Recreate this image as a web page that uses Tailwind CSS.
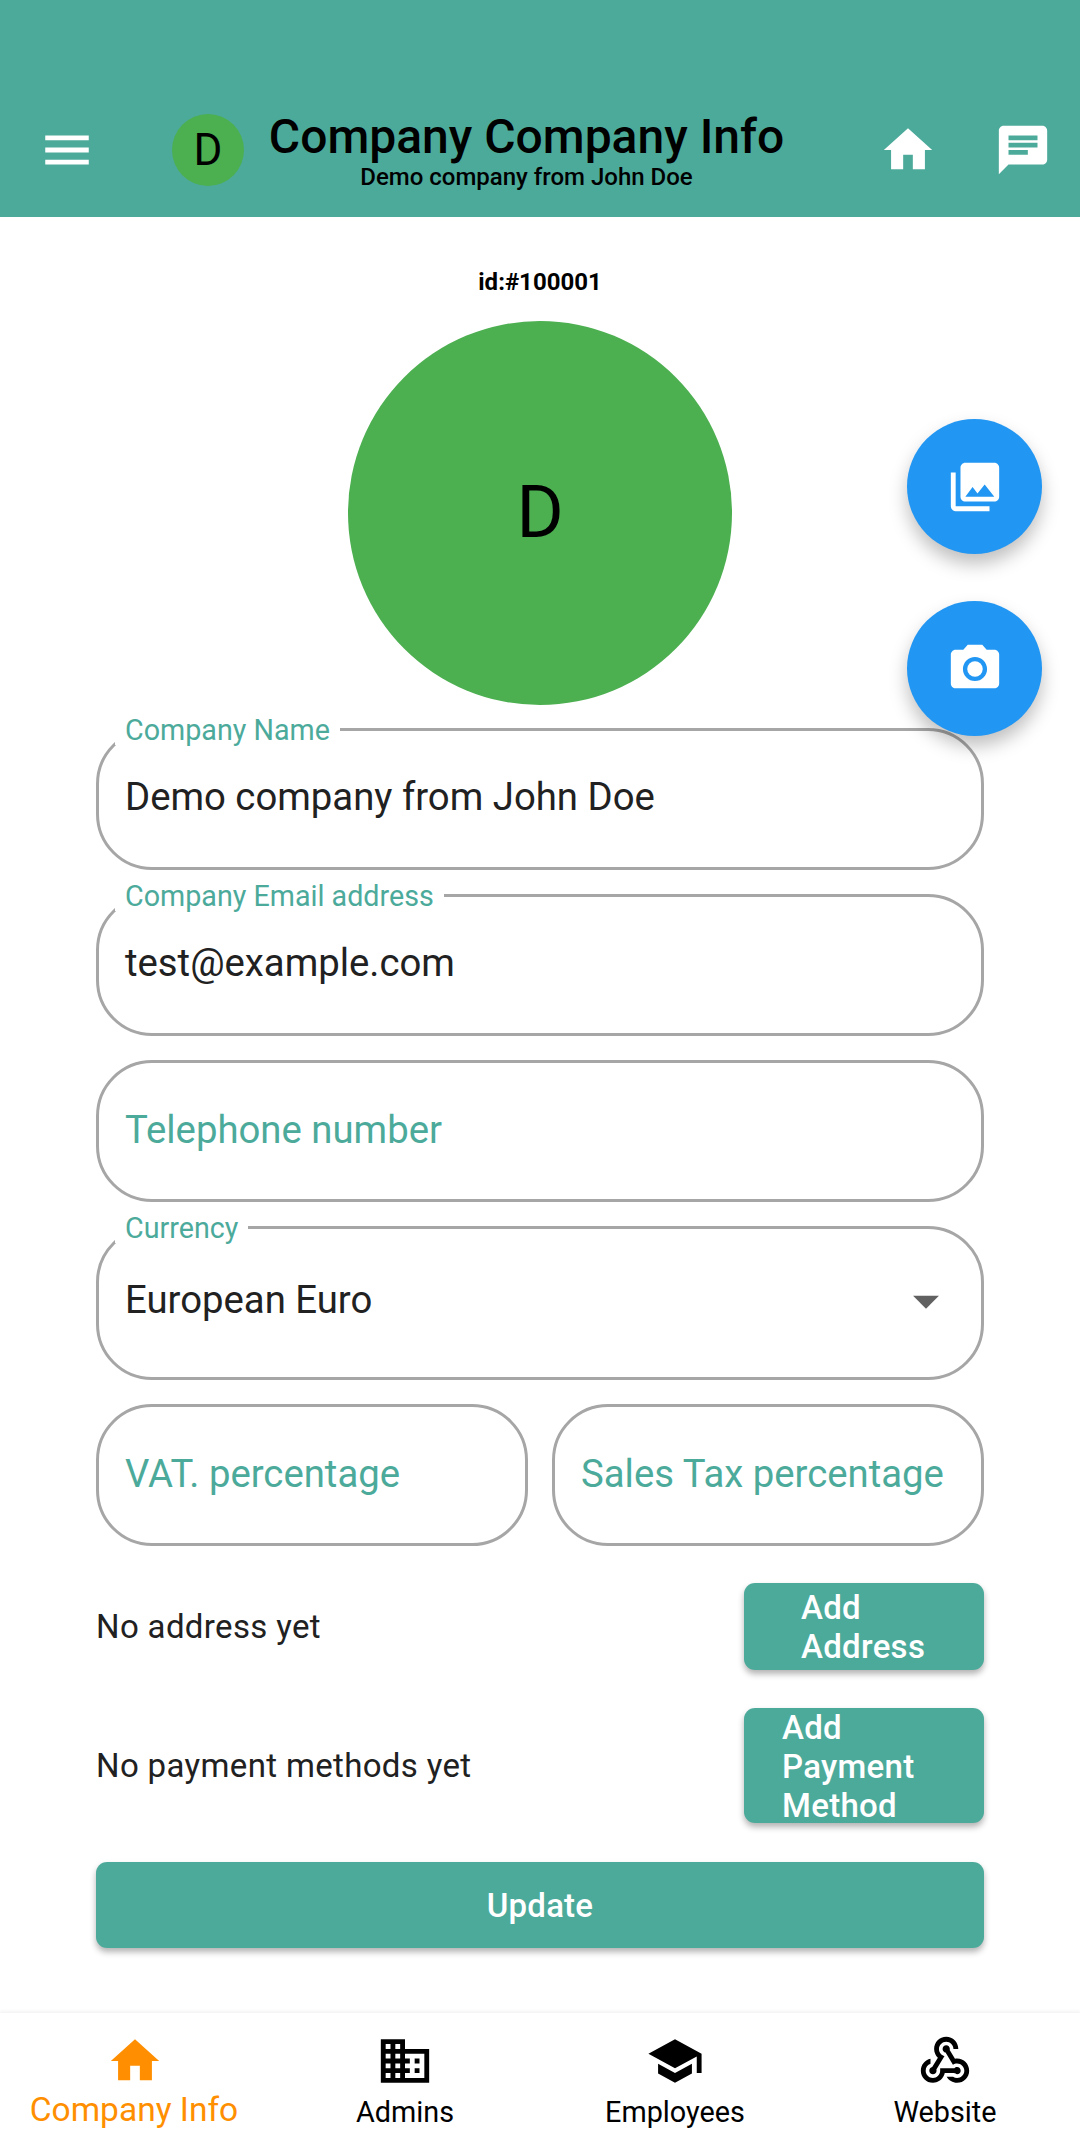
<!DOCTYPE html>
<html><head><meta charset="utf-8"><script src="https://cdn.jsdelivr.net/npm/@tailwindcss/browser@4"></script></head>
<body class="m-0 bg-white">
<div class="relative w-[1080px] h-[2148px] flex flex-col overflow-hidden bg-white font-['Roboto',sans-serif] text-[#212121]">
  <header class="h-[217px] shrink-0 bg-[#4CAA9B] pt-[83px] flex items-start">
    <div class="h-[134px] w-full flex items-center pl-[38px] pr-[28px] text-black">
      <svg class="w-[58px] h-[58px]" viewBox="0 0 24 24" fill="#fff"><path d="M3 18h18v-2H3v2zm0-5h18v-2H3v2zm0-7v2h18V6H3z"/></svg>
      <div class="ml-[76px] w-[72px] h-[72px] rounded-full bg-[#4CAF50] flex items-center justify-center text-[44px] leading-none">D</div>
      <div class="ml-[26px] pt-[2px] w-[513px] flex flex-col items-center">
        <div class="text-[48px] leading-[48px] font-medium whitespace-nowrap">Company Company Info</div>
        <div class="text-[24px] leading-[24px] mt-[4px] font-medium whitespace-nowrap">Demo company from John Doe</div>
      </div>
      <svg class="ml-auto w-[58px] h-[58px]" viewBox="0 0 24 24" fill="#fff"><path d="M10 20v-6h4v6h5v-8h3L12 3 2 12h3v8z"/></svg>
      <svg class="ml-[57px] w-[58px] h-[58px]" viewBox="0 0 24 24" fill="#fff"><path d="M20 2H4c-1.1 0-1.99.9-1.99 2L2 22l4-4h14c1.1 0 2-.9 2-2V4c0-1.1-.9-2-2-2zM6 9h12v2H6V9zm8 5H6v-2h8v2zm4-6H6V6h12v2z"/></svg>
    </div>
  </header>

  <main class="flex-1 px-[96px] flex flex-col">
    <div class="mt-[50px] h-[30px] text-center text-[24px] leading-[30px] font-bold text-black">id:#100001</div>
    <div class="mt-[24px] mx-auto w-[384px] h-[384px] rounded-full bg-[#4CAF50] flex items-center justify-center text-[72px] leading-none text-black">D</div>

    <div class="relative mt-[23px] h-[142px] rounded-[56px] border-[3px] border-[#a6a6a6] flex items-center pl-[26px] text-[38.3px]">
      <span class="absolute -top-[16px] left-[16px] h-[30px] bg-white px-[10px] text-[28.7px] leading-[30px] text-[#4CAA9B]">Company Name</span>
      <span class="-mt-[4px]">Demo company from John Doe</span>
    </div>
    <div class="relative mt-[24px] h-[142px] rounded-[56px] border-[3px] border-[#a6a6a6] flex items-center pl-[26px] text-[38.3px]">
      <span class="absolute -top-[16px] left-[16px] h-[30px] bg-white px-[10px] text-[28.7px] leading-[30px] text-[#4CAA9B]">Company Email address</span>
      <span class="-mt-[4px]">test@example.com</span>
    </div>
    <div class="mt-[24px] h-[142px] rounded-[56px] border-[3px] border-[#a6a6a6] flex items-center pl-[26px] text-[38.3px] text-[#4CAA9B]"><span class="-mt-[2px]">Telephone number</span></div>
    <div class="relative mt-[24px] h-[154px] rounded-[56px] border-[3px] border-[#a6a6a6] flex items-center justify-between pl-[26px] pr-[24px] text-[38.3px]">
      <span class="absolute -top-[16px] left-[16px] h-[30px] bg-white px-[10px] text-[28.7px] leading-[30px] text-[#4CAA9B]">Currency</span>
      <span class="-mt-[6px]">European Euro</span>
      <svg class="w-[62px] h-[62px] -mt-[4px]" viewBox="0 0 24 24" fill="#616161"><path d="M7 10l5 5 5-5z"/></svg>
    </div>
    <div class="mt-[24px] flex gap-[24px]">
      <div class="flex-1 h-[142px] rounded-[56px] border-[3px] border-[#a6a6a6] flex items-center pl-[26px] text-[38.3px] text-[#4CAA9B]"><span class="-mt-[3px]">VAT. percentage</span></div>
      <div class="flex-1 h-[142px] rounded-[56px] border-[3px] border-[#a6a6a6] flex items-center pl-[26px] text-[38.3px] text-[#4CAA9B] whitespace-nowrap"><span class="-mt-[3px]">Sales Tax percentage</span></div>
    </div>

    <div class="mt-[37px] flex items-center justify-between">
      <span class="text-[33px] tracking-[0.35px]">No address yet</span>
      <div class="w-[240px] h-[87px] rounded-[11px] bg-[#4CAA9B] shadow-[0_4px_6px_rgba(0,0,0,0.3)] pl-[57px] pt-[1px] flex flex-col justify-center text-white text-[33px] tracking-[0.3px] leading-[39px] font-medium"><span>Add</span><span>Address</span></div>
    </div>
    <div class="mt-[38px] flex items-center justify-between">
      <span class="text-[33px] tracking-[0.35px]">No payment methods yet</span>
      <div class="w-[240px] h-[115px] rounded-[11px] bg-[#4CAA9B] shadow-[0_4px_6px_rgba(0,0,0,0.3)] pl-[38px] pt-[1px] flex flex-col justify-center text-white text-[33px] tracking-[0.3px] leading-[39px] font-medium"><span>Add</span><span>Payment</span><span>Method</span></div>
    </div>
    <div class="mt-[39px] h-[86px] rounded-[11px] bg-[#4CAA9B] shadow-[0_4px_6px_rgba(0,0,0,0.3)] pt-[1px] flex items-center justify-center text-white text-[33px] tracking-[0.2px] font-medium">Update</div>
  </main>

  <nav class="h-[135px] shrink-0 shadow-[0_-2px_3px_rgba(0,0,0,0.05)] grid grid-cols-4 text-black">
    <div class="flex flex-col items-center pt-[19px] text-[#FF8F00]">
      <svg class="w-[58px] h-[58px]" viewBox="0 0 24 24" fill="#FF8F00"><path d="M10 20v-6h4v6h5v-8h3L12 3 2 12h3v8z"/></svg>
      <span class="text-[33.5px] leading-[38px] mt-[1px] -ml-[2px] whitespace-nowrap">Company Info</span>
    </div>
    <div class="flex flex-col items-center pt-[19px]">
      <svg class="w-[58px] h-[58px]" viewBox="0 0 24 24" fill="#000"><path d="M12 7V3H2v18h20V7H12zM6 19H4v-2h2v2zm0-4H4v-2h2v2zm0-4H4V9h2v2zm0-4H4V5h2v2zm4 12H8v-2h2v2zm0-4H8v-2h2v2zm0-4H8V9h2v2zm0-4H8V5h2v2zm10 12h-8v-2h2v-2h-2v-2h2v-2h-2V9h8v10zm-2-8h-2v2h2v-2zm0 4h-2v2h2v-2z"/></svg>
      <span class="text-[28.8px] leading-[38px] mt-[3px] whitespace-nowrap">Admins</span>
    </div>
    <div class="flex flex-col items-center pt-[19px]">
      <svg class="w-[58px] h-[58px]" viewBox="0 0 24 24" fill="#000"><path d="M5 13.18v4L12 21l7-3.82v-4L12 17l-7-3.82zM12 3L1 9l11 6 9-4.91V17h2V9L12 3z"/></svg>
      <span class="text-[28.8px] leading-[38px] mt-[3px] whitespace-nowrap">Employees</span>
    </div>
    <div class="flex flex-col items-center pt-[19px]">
      <svg class="w-[58px] h-[58px]" viewBox="0 0 24 24" fill="#000"><path d="M10 15h5.88c.27-.31.67-.5 1.12-.5.83 0 1.5.67 1.5 1.5s-.67 1.5-1.5 1.5c-.44 0-.84-.19-1.12-.5H11.9c-.46 2.28-2.48 4-4.9 4-2.76 0-5-2.24-5-5 0-2.42 1.72-4.44 4-4.9v2.07c-1.16.41-2 1.53-2 2.83 0 1.65 1.35 3 3 3s3-1.35 3-3v-1zm2.5-11c1.65 0 3 1.35 3 3h2c0-2.76-2.24-5-5-5s-5 2.24-5 5c0 1.43.6 2.71 1.55 3.62l-2.35 3.9c-.68.14-1.2.75-1.2 1.48 0 .83.67 1.5 1.5 1.5s1.5-.67 1.5-1.5c0-.16-.02-.31-.07-.45l3.38-5.63C10.49 9.61 9.5 8.42 9.5 7c0-1.65 1.35-3 3-3zm4.5 9c-.64 0-1.23.2-1.72.54l-3.05-5.07C11.53 8.35 11 7.74 11 7c0-.83.67-1.5 1.5-1.5S14 6.17 14 7c0 .15-.02.29-.06.43l2.19 3.65c.28-.05.57-.08.87-.08 2.76 0 5 2.24 5 5s-2.24 5-5 5c-1.85 0-3.47-1.01-4.33-2.5h2.67c.48.32 1.05.5 1.66.5 1.65 0 3-1.35 3-3s-1.35-3-3-3z"/></svg>
      <span class="text-[28.8px] leading-[38px] mt-[3px] whitespace-nowrap">Website</span>
    </div>
  </nav>

  <div class="absolute left-[907px] top-[419px] w-[135px] h-[135px] rounded-full bg-[#2196F3] shadow-[0_10px_18px_rgba(0,0,0,0.25)] flex items-center justify-center">
    <svg class="w-[58px] h-[58px]" viewBox="0 0 24 24" fill="#fff"><path d="M22 16V4c0-1.1-.9-2-2-2H8c-1.1 0-2 .9-2 2v12c0 1.1.9 2 2 2h12c1.1 0 2-.9 2-2zm-11-4l2.03 2.71L16 11l4 5H8l3-4zM2 6v14c0 1.1.9 2 2 2h14v-2H4V6H2z"/></svg>
  </div>
  <div class="absolute left-[907px] top-[601px] w-[135px] h-[135px] rounded-full bg-[#2196F3] shadow-[0_10px_18px_rgba(0,0,0,0.25)] flex items-center justify-center">
    <svg class="w-[58px] h-[58px]" viewBox="0 0 24 24" fill="#fff"><circle cx="12" cy="12" r="3.2"/><path d="M9 2L7.17 4H4c-1.1 0-2 .9-2 2v12c0 1.1.9 2 2 2h16c1.1 0 2-.9 2-2V6c0-1.1-.9-2-2-2h-3.17L15 2H9zm3 15c-2.76 0-5-2.24-5-5s2.24-5 5-5 5 2.24 5 5-2.24 5-5 5z"/></svg>
  </div>
</div>
</body></html>
